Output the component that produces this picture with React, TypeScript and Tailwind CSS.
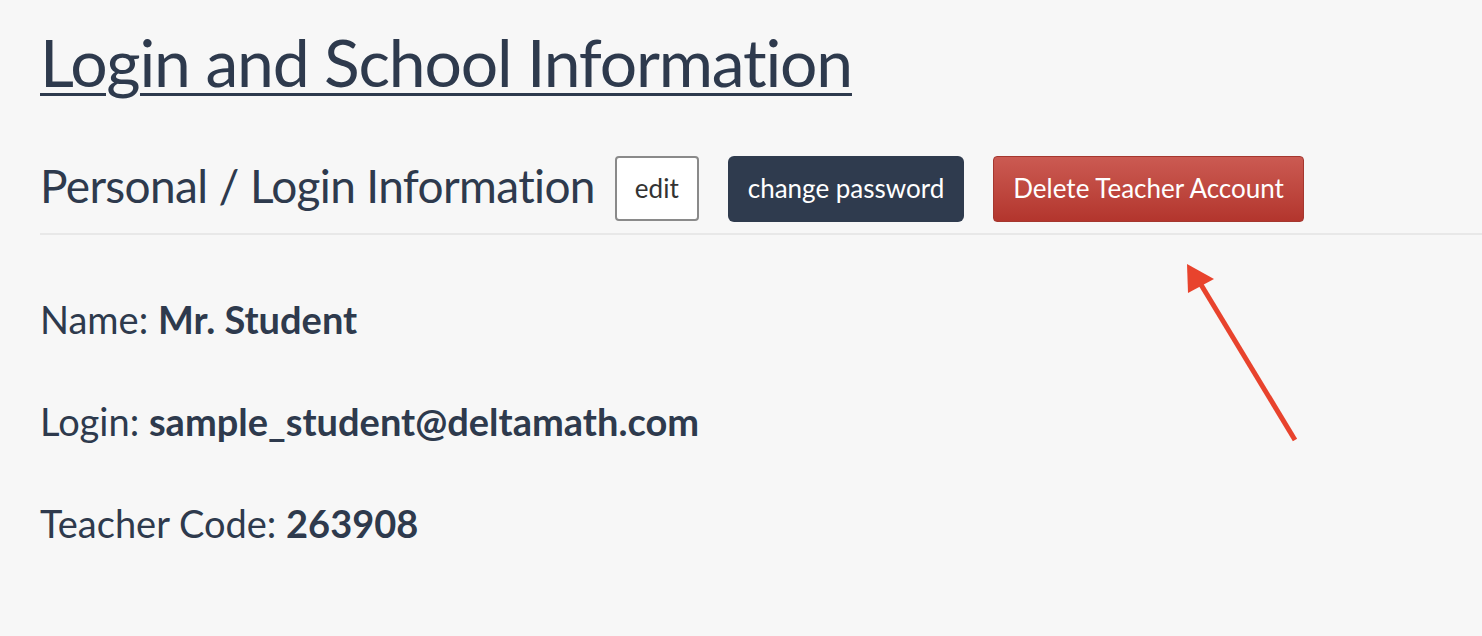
import React from 'react';

const Field: React.FC<{ label: string; value: string }> = ({ label, value }) => (
    <p className="text-[38px] leading-[40px]">
        {label} <span className="font-bold">{value}</span>
    </p>
);

const App: React.FC = () => {
    return (
        <div className="relative min-h-[636px] w-full overflow-hidden bg-[#f7f7f7] text-[#2e3a4d] font-['Lato','Liberation_Sans',sans-serif] [font-variant-ligatures:none]">
            <div className="pl-10 pt-[22px]">
                <h1 className="text-[66px] leading-[80px] tracking-[-1.2px] underline decoration-[3px] underline-offset-[6px] w-fit">
                    Login and School Information
                </h1>
                <div className="mt-[51px] flex items-center">
                    <h2 className="mb-[5px] text-[46px] leading-[66px] tracking-[-0.65px]">Personal / Login Information</h2>
                    <button className="ml-5 h-[65px] px-[18px] rounded-[4px] border-2 border-[#8a8a8a] bg-white text-[26px] text-[#333]">
                        edit
                    </button>
                    <button className="ml-[29px] h-[66px] px-[20px] rounded-[6px] bg-[#2f3b4e] text-[26px] text-white">
                        change password
                    </button>
                    <button className="ml-[29px] h-[66px] px-[19px] rounded-[4px] border border-[#a5372f] bg-gradient-to-b from-[#cb5a52] to-[#b3352d] text-[26px] text-white">
                        Delete Teacher Account
                    </button>
                </div>
            </div>
            <div className="ml-10 mt-[9px] h-[2px] bg-[#e8e8e8]" />
            <div className="pl-10 pt-[64px] flex flex-col gap-[62px]">
                <Field label="Name:" value="Mr. Student" />
                <Field label="Login:" value="sample_student@deltamath.com" />
                <Field label="Teacher Code:" value="263908" />
            </div>
            <svg className="absolute left-[1170px] top-[255px]" width="140" height="195" viewBox="0 0 140 195">
                <line x1="125" y1="185" x2="30" y2="28" stroke="#e8432d" strokeWidth="5" />
                <polygon points="17,9 44,24 18,38" fill="#e8432d" />
            </svg>
        </div>
    );
};

export default App;
